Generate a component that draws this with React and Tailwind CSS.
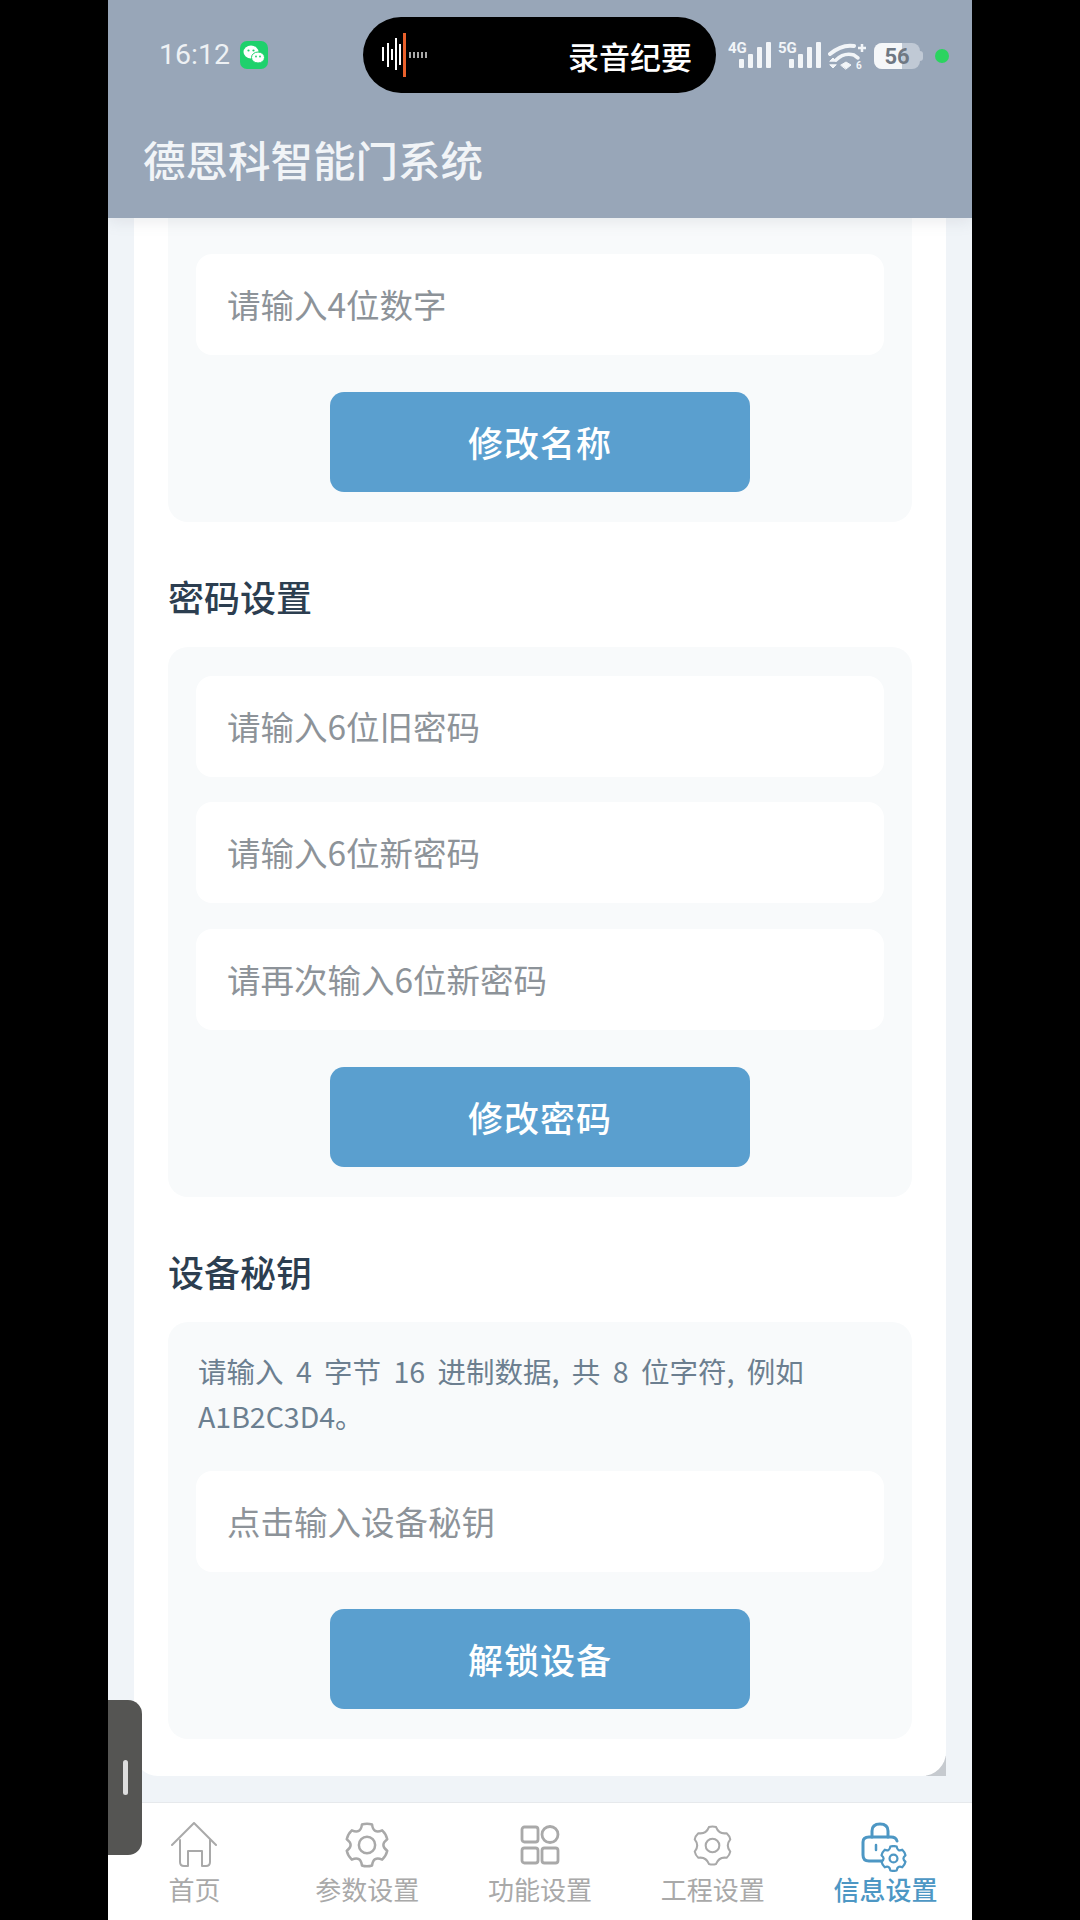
const Signal = ({ label }) => (
    <svg width="46" height="36" viewBox="0 -6 46 36" fill="#f2f5f8">
        <text x="0" y="12" fontSize="15" fontWeight="700" fontFamily="Roboto, sans-serif">{label}</text>
        <rect x="11" y="18" width="5" height="9" rx="1" />
        <rect x="20" y="13" width="5" height="14" rx="1" />
        <rect x="29" y="6" width="5" height="21" rx="1" />
        <rect x="38" y="1" width="5" height="26" rx="1" />
    </svg>
)

const Wifi = () => (
    <svg width="38" height="30" viewBox="0 0 38 30" fill="none" stroke="#f2f5f8" strokeLinecap="round">
        <path d="M2 13 Q14 3 26 5" strokeWidth="4" />
        <path d="M8 19 Q16 11 26 14 L30 17" strokeWidth="3.5" />
        <path d="M13 24 L18 21 L23 24 L18 28 Z" fill="#f2f5f8" strokeWidth="1" />
        <path d="M30 7 H38 M34 3 V11" strokeWidth="2.5" strokeLinecap="butt" />
        <path d="M2 20 L5 17 L8 20 Z M2 24 L5 27 L8 24 Z" fill="#f2f5f8" strokeWidth="1" />
        <text x="28" y="28" fontSize="10" fontWeight="700" fill="#f2f5f8" stroke="none" fontFamily="Roboto, sans-serif">6</text>
    </svg>
)

const Wave = () => (
    <svg width="46" height="44" viewBox="0 0 46 44">
        <g fill="#fff">
            <rect x="0" y="14" width="2" height="14" />
            <rect x="5" y="10" width="2" height="24" />
            <rect x="9" y="16" width="2" height="11" />
            <rect x="13" y="5" width="2" height="32" />
            <rect x="17" y="11" width="2" height="21" />
        </g>
        <rect x="21" y="0" width="3" height="44" fill="#e9612c" />
        <g fill="#a9a9a9">
            <rect x="27" y="19" width="2" height="6" />
            <rect x="31" y="19" width="2" height="6" />
            <rect x="35" y="19" width="2" height="6" />
            <rect x="39" y="19" width="2" height="6" />
            <rect x="43" y="19" width="2" height="6" />
        </g>
    </svg>
)

const WeChat = () => (
    <div className="w-[28px] h-[28px] rounded-[7px] bg-[#1fd16c] flex items-center justify-center">
        <svg width="22" height="20" viewBox="0 0 22 20" fill="#fff">
            <ellipse cx="8" cy="7" rx="7.5" ry="6.5" />
            <ellipse cx="15" cy="12.5" rx="6.5" ry="5.5" stroke="#1fd16c" strokeWidth="1" />
            <circle cx="5.5" cy="5.5" r="1.1" fill="#1fd16c" />
            <circle cx="10.5" cy="5.5" r="1.1" fill="#1fd16c" />
            <circle cx="13" cy="11.5" r="0.9" fill="#1fd16c" />
            <circle cx="17" cy="11.5" r="0.9" fill="#1fd16c" />
        </svg>
    </div>
)

// six lobes, one pointing straight up
const gearPath = (outer, root, spread) => {
    const at = (deg, r) => {
        const a = (deg - 90) * Math.PI / 180
        return `${(24 + r * Math.cos(a)).toFixed(2)} ${(24 + r * Math.sin(a)).toFixed(2)}`
    }
    let d = `M${at(-spread, outer)}`
    for (let i = 0; i < 6; i++) {
        const mid = i * 60
        d += ` Q${at(mid, outer + 1)} ${at(mid + spread, outer)}`
        d += ` Q${at(mid + 30, root)} ${at(mid + 60 - spread, outer)}`
    }
    return d + " Z"
}

const Gear = ({ size, stroke = 2.6, color = "#a9a9a9", fill = "none", outer = 22, root = 13, spread = 14, hole = 8.5 }) => (
    <svg width={size} height={size} viewBox="0 0 48 48" fill={fill} stroke={color} strokeWidth={stroke} strokeLinejoin="round">
        <path d={gearPath(outer, root, spread)} />
        <circle cx="24" cy="24" r={hole} />
    </svg>
)

const HomeIcon = () => (
    <svg width="48" height="46" viewBox="0 0 48 46" fill="none" stroke="#a9a9a9" strokeWidth="2" strokeLinejoin="round" strokeLinecap="round">
        <path d="M2 23 L24 1 L46 23" />
        <path d="M10 18 V40 Q10 44 14 44 H18 V29 H32 V44 H36 Q40 44 40 40 V18" />
    </svg>
)

const GridIcon = () => (
    <svg width="40" height="40" viewBox="0 0 40 40" fill="none" stroke="#a9a9a9" strokeWidth="2.8">
        <rect x="2" y="2" width="16" height="15" rx="2.5" />
        <circle cx="30" cy="9.5" r="8" />
        <rect x="2" y="23" width="16" height="15" rx="2.5" />
        <rect x="22" y="23" width="16" height="15" rx="2.5" />
    </svg>
)

const LockIcon = () => (
    <svg width="50" height="46" viewBox="0 0 50 46" fill="none" stroke="#4d97c4" strokeWidth="3" strokeLinecap="round" strokeLinejoin="round">
        <path d="M11 15 V9 Q11 2 19 2 Q27 2 27 9 V15" />
        <path d="M24 39 H8 Q2 39 2 33 V20 Q2 15 8 15 H30 Q35 15 36 19" />
        <path d="M15 23 V28" strokeWidth="2.5" />
    </svg>
)

const Field = ({ placeholder }) => (
    <input
        placeholder={placeholder}
        className="w-full h-[101px] shrink-0 rounded-[16px] bg-white pl-[31px] pb-[2px] text-[33.5px] text-[#4b5563] placeholder:text-[#8d9399] outline-none"
    />
)

const Submit = ({ children }) => (
    <button className="w-[420px] h-[100px] mt-[12px] self-center rounded-[14px] bg-[#5a9fcf] text-white text-[35px] font-medium tracking-[1px]">
        {children}
    </button>
)

const Panel = ({ children, top = false }) => (
    <div className={`flex flex-col gap-[25.2px] bg-[#f8fafb] px-[28px] pb-[30px] ${top ? "pt-[36px] rounded-b-[20px]" : "pt-[29px] rounded-[20px]"}`}>
        {children}
    </div>
)

const Heading = ({ children }) => (
    <h2 className="mt-[49px] mb-[26px] h-[50px] leading-[50px] text-[36px] font-medium text-[#2c3e50]">{children}</h2>
)

const tabs = [
    { label: "首页", icon: <HomeIcon /> },
    { label: "参数设置", icon: <Gear size={46} /> },
    { label: "功能设置", icon: <GridIcon /> },
    { label: "工程设置", icon: <Gear size={41} stroke={2.4} root={15} spread={11} hole={8} /> },
    { label: "信息设置", icon: <LockIcon />, active: true },
]

export default function App() {
    return (
        <div className="w-[1080px] h-[1920px] bg-black flex justify-center font-['Noto_Sans_CJK_SC',sans-serif]">
            <div className="relative w-[864px] h-full flex flex-col overflow-hidden bg-[#f0f4f8]">
                <header className="relative z-10 h-[218px] shrink-0 bg-[#98a6b8] flex flex-col shadow-[0_4px_14px_rgba(120,130,140,0.14)]">
                    <div className="h-[76px] mt-[17px] flex items-center">
                        <span className="ml-[51px] w-[70px] text-[28.5px] text-[#eef1f4] font-['Roboto',sans-serif]">16:12</span>
                        <div className="ml-[11px]"><WeChat /></div>
                        <div className="ml-[95px] w-[353px] h-[76px] rounded-full bg-black flex items-center justify-between pl-[19px] pr-[24px]">
                            <Wave />
                            <span className="text-[31px] leading-none font-medium text-white">录音纪要</span>
                        </div>
                        <div className="ml-[12px] mt-[2px] flex items-center gap-[4px]">
                            <div className="-mt-[6px]"><Signal label="4G" /></div>
                            <div className="-mt-[6px]"><Signal label="5G" /></div>
                            <Wifi />
                            <div className="relative ml-[4px] w-[46px] h-[26px] rounded-[8px] bg-[#c0c9d5] overflow-hidden">
                                <div className="h-full w-[28px] bg-[#f5f7f9]"></div>
                                <span className="absolute inset-0 flex items-center justify-center text-[22px] font-bold text-[#6f7883] font-['Roboto',sans-serif]">56</span>
                            </div>
                            <div className="w-[3px] h-[10px] rounded-r-full bg-[#c0c9d5] -ml-[4px]"></div>
                            <div className="ml-[8px] w-[14px] h-[14px] rounded-full bg-[#2bd45f]"></div>
                        </div>
                    </div>
                    <h1 className="ml-[35px] mt-[36px] text-[42.5px] leading-[60px] font-medium text-[#f1f4f7]">德恩科智能门系统</h1>
                </header>

                <main className="flex-1 min-h-0 px-[26px] pb-[26px]">
                    <div className="relative h-full">
                        <div className="absolute right-0 bottom-0 w-[20px] h-[20px] bg-[#c6cacf]"></div>
                        <div className="relative h-full bg-white rounded-b-[24px] px-[34px]">
                            <Panel top>
                                <Field placeholder="请输入4位数字" />
                                <Submit>修改名称</Submit>
                            </Panel>

                            <Heading>密码设置</Heading>
                            <Panel>
                                <Field placeholder="请输入6位旧密码" />
                                <Field placeholder="请输入6位新密码" />
                                <Field placeholder="请再次输入6位新密码" />
                                <Submit>修改密码</Submit>
                            </Panel>

                            <Heading>设备秘钥</Heading>
                            <Panel>
                                <p className="-mt-[3px] mb-[8px] ml-[2px] text-[28.5px] leading-[45px] text-[#6c7f90] [word-spacing:6px]">请输入 4 字节 16 进制数据, 共 8 位字符, 例如 A1B2C3D4。</p>
                                <Field placeholder="点击输入设备秘钥" />
                                <Submit>解锁设备</Submit>
                            </Panel>
                        </div>
                    </div>
                </main>

                <nav className="h-[118px] shrink-0 bg-white border-t border-[#e6e9ec] grid grid-cols-5">
                    {tabs.map(tab => (
                        <div key={tab.label} className="flex flex-col items-center pt-[19px]">
                            <div className="relative h-[46px] flex items-center justify-center">
                                {tab.icon}
                                {tab.active && (
                                    <div className="absolute right-[4px] bottom-[-4px]">
                                        <Gear size={27} stroke={4} color="#4d97c4" fill="#ffffff" hole={7} spread={15} root={14} />
                                    </div>
                                )}
                            </div>
                            <span className={`mt-[5px] text-[26px] leading-[32px] ${tab.active ? "text-[#4d97c4] font-medium" : "text-[#a9a9a9]"}`}>{tab.label}</span>
                        </div>
                    ))}
                </nav>

                <div className="absolute left-0 top-[1700px] w-[34px] h-[155px] rounded-r-[14px] bg-[#555553] flex items-center justify-center">
                    <div className="w-[5px] h-[35px] rounded-full bg-[#dedede]"></div>
                </div>
            </div>
        </div>
    )
}
